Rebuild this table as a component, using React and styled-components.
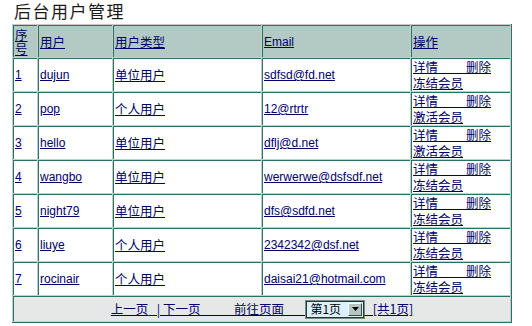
import React from 'react';
import styled, { createGlobalStyle } from 'styled-components';

const GlobalStyle = createGlobalStyle`
  body {
    margin: 0;
    background: #ffffff;
    font-family: "Liberation Sans", "Noto Sans CJK SC", sans-serif;
    font-size: 12px;
  }
`;

const Page = styled.div`
  padding: 0 0 0 12px;
  width: 501px;
`;

const Title = styled.h1`
  margin: 0 0 3px 2px;
  font-family: "Noto Sans CJK SC", sans-serif;
  font-weight: normal;
  font-size: 17px;
  letter-spacing: 1.5px;
  line-height: 21px;
  color: #1a1a1a;
`;

const Table = styled.table`
  width: 500px;
  table-layout: fixed;
  border-collapse: separate;
  border-spacing: 1px;
  background: #c4cdc8;
  border-right: 1px solid #2b7266;
  border-bottom: 1px solid #2b7266;
`;

const HeadCell = styled.th`
  height: 31px;
  padding: 0 1px;
  text-align: left;
  font-weight: normal;
  font-family: "Noto Sans CJK SC", sans-serif;
  font-size: 12.5px;
  background: #b3cac4;
  border-left: 1px solid #2b7266;
  border-top: 1px solid #2b7266;
  line-height: 14px;
  overflow: hidden;
`;

const Cell = styled.td`
  height: 32px;
  padding: 0 1px;
  background: #ffffff;
  border-left: 1px solid #2b7266;
  border-top: 1px solid #2b7266;
  vertical-align: ${(p) => (p.top ? 'top' : 'middle')};
  line-height: 14px;
  white-space: nowrap;
  overflow: hidden;
`;

const ActionLine = styled.div`
  height: 16px;
  line-height: 16px;
  overflow: hidden;
  white-space: pre;
`;

const Link = styled.a`
  color: #000066;
  text-decoration: underline;
  font-family: "Liberation Sans", "Noto Sans CJK SC", sans-serif;
  font-size: 12px;
`;

const Zh = styled(Link)`
  font-family: "Noto Sans CJK SC", sans-serif;
  font-size: 12.5px;
  white-space: ${(p) => (p.$keep ? 'pre' : 'normal')};
`;

const FooterCell = styled.td`
  height: 24px;
  padding: 0;
  background: #e6e8e8;
  border-left: 1px solid #2b7266;
  border-top: 1px solid #2b7266;
  text-align: center;
  white-space: nowrap;
`;

const Pager = styled.div`
  display: inline-flex;
  align-items: center;
  height: 20px;
  line-height: 16px;
`;

const SelectBox = styled.div`
  display: inline-flex;
  align-items: center;
  justify-content: space-between;
  width: 58px;
  height: 17px;
  box-sizing: border-box;
  border: 1px solid #1d3a33;
  outline: 1px solid #7a8c86;
  background: #ddf0ff;
  padding: 0 1px 0 3px;
  font-family: "Noto Sans CJK SC", sans-serif;
  font-size: 12px;
  color: #000;
`;

const ArrowButton = styled.span`
  display: flex;
  align-items: center;
  justify-content: center;
  width: 14px;
  height: 13px;
  background: #b4c6bf;
  border: 1px solid #ffffff;
  border-right-color: #3a4a45;
  border-bottom-color: #3a4a45;
  box-sizing: border-box;
`;

const users = [
  { id: 1, name: 'dujun', type: '单位用户', email: 'sdfsd@fd.net', action: '冻结会员' },
  { id: 2, name: 'pop', type: '个人用户', email: '12@rtrtr', action: '激活会员' },
  { id: 3, name: 'hello', type: '单位用户', email: 'dflj@d.net', action: '激活会员' },
  { id: 4, name: 'wangbo', type: '单位用户', email: 'werwerwe@dsfsdf.net', action: '冻结会员' },
  { id: 5, name: 'night79', type: '单位用户', email: 'dfs@sdfd.net', action: '冻结会员' },
  { id: 6, name: 'liuye', type: '个人用户', email: '2342342@dsf.net', action: '冻结会员' },
  { id: 7, name: 'rocinair', type: '个人用户', email: 'daisai21@hotmail.com', action: '冻结会员' },
];

export default function App() {
  return (
    <Page>
      <GlobalStyle />
      <Title>后台用户管理</Title>
      <Table>
        <colgroup>
          <col style={{ width: 24 }} />
          <col style={{ width: 74 }} />
          <col style={{ width: 148 }} />
          <col style={{ width: 148 }} />
          <col />
        </colgroup>
        <thead>
          <tr>
            <HeadCell><Zh href="#">序号</Zh></HeadCell>
            <HeadCell><Zh href="#">用户</Zh></HeadCell>
            <HeadCell><Zh href="#">用户类型</Zh></HeadCell>
            <HeadCell><Link href="#">Email</Link></HeadCell>
            <HeadCell><Zh href="#">操作</Zh></HeadCell>
          </tr>
        </thead>
        <tbody>
          {users.map((u) => (
            <tr key={u.id}>
              <Cell><Link href="#">{u.id}</Link></Cell>
              <Cell><Link href="#">{u.name}</Link></Cell>
              <Cell><Zh href="#">{u.type}</Zh></Cell>
              <Cell><Link href="#">{u.email}</Link></Cell>
              <Cell top>
                <ActionLine><Zh $keep href="#">{'详情          删除'}</Zh></ActionLine>
                <ActionLine><Zh $keep href="#">{u.action}</Zh></ActionLine>
              </Cell>
            </tr>
          ))}
          <tr>
            <FooterCell colSpan={5}>
              <Pager>
                <Zh $keep href="#">{'上一页'}</Zh>
                <Zh $keep href="#">{'   | 下一页            前往页面        '}</Zh>
                <SelectBox>
                  第1页
                  <ArrowButton>
                    <svg width="7" height="4" viewBox="0 0 7 4">
                      <path d="M0 0 H7 L3.5 4 Z" fill="#000" />
                    </svg>
                  </ArrowButton>
                </SelectBox>
                <Zh $keep href="#">{'   [共1页]'}</Zh>
              </Pager>
            </FooterCell>
          </tr>
        </tbody>
      </Table>
    </Page>
  );
}
